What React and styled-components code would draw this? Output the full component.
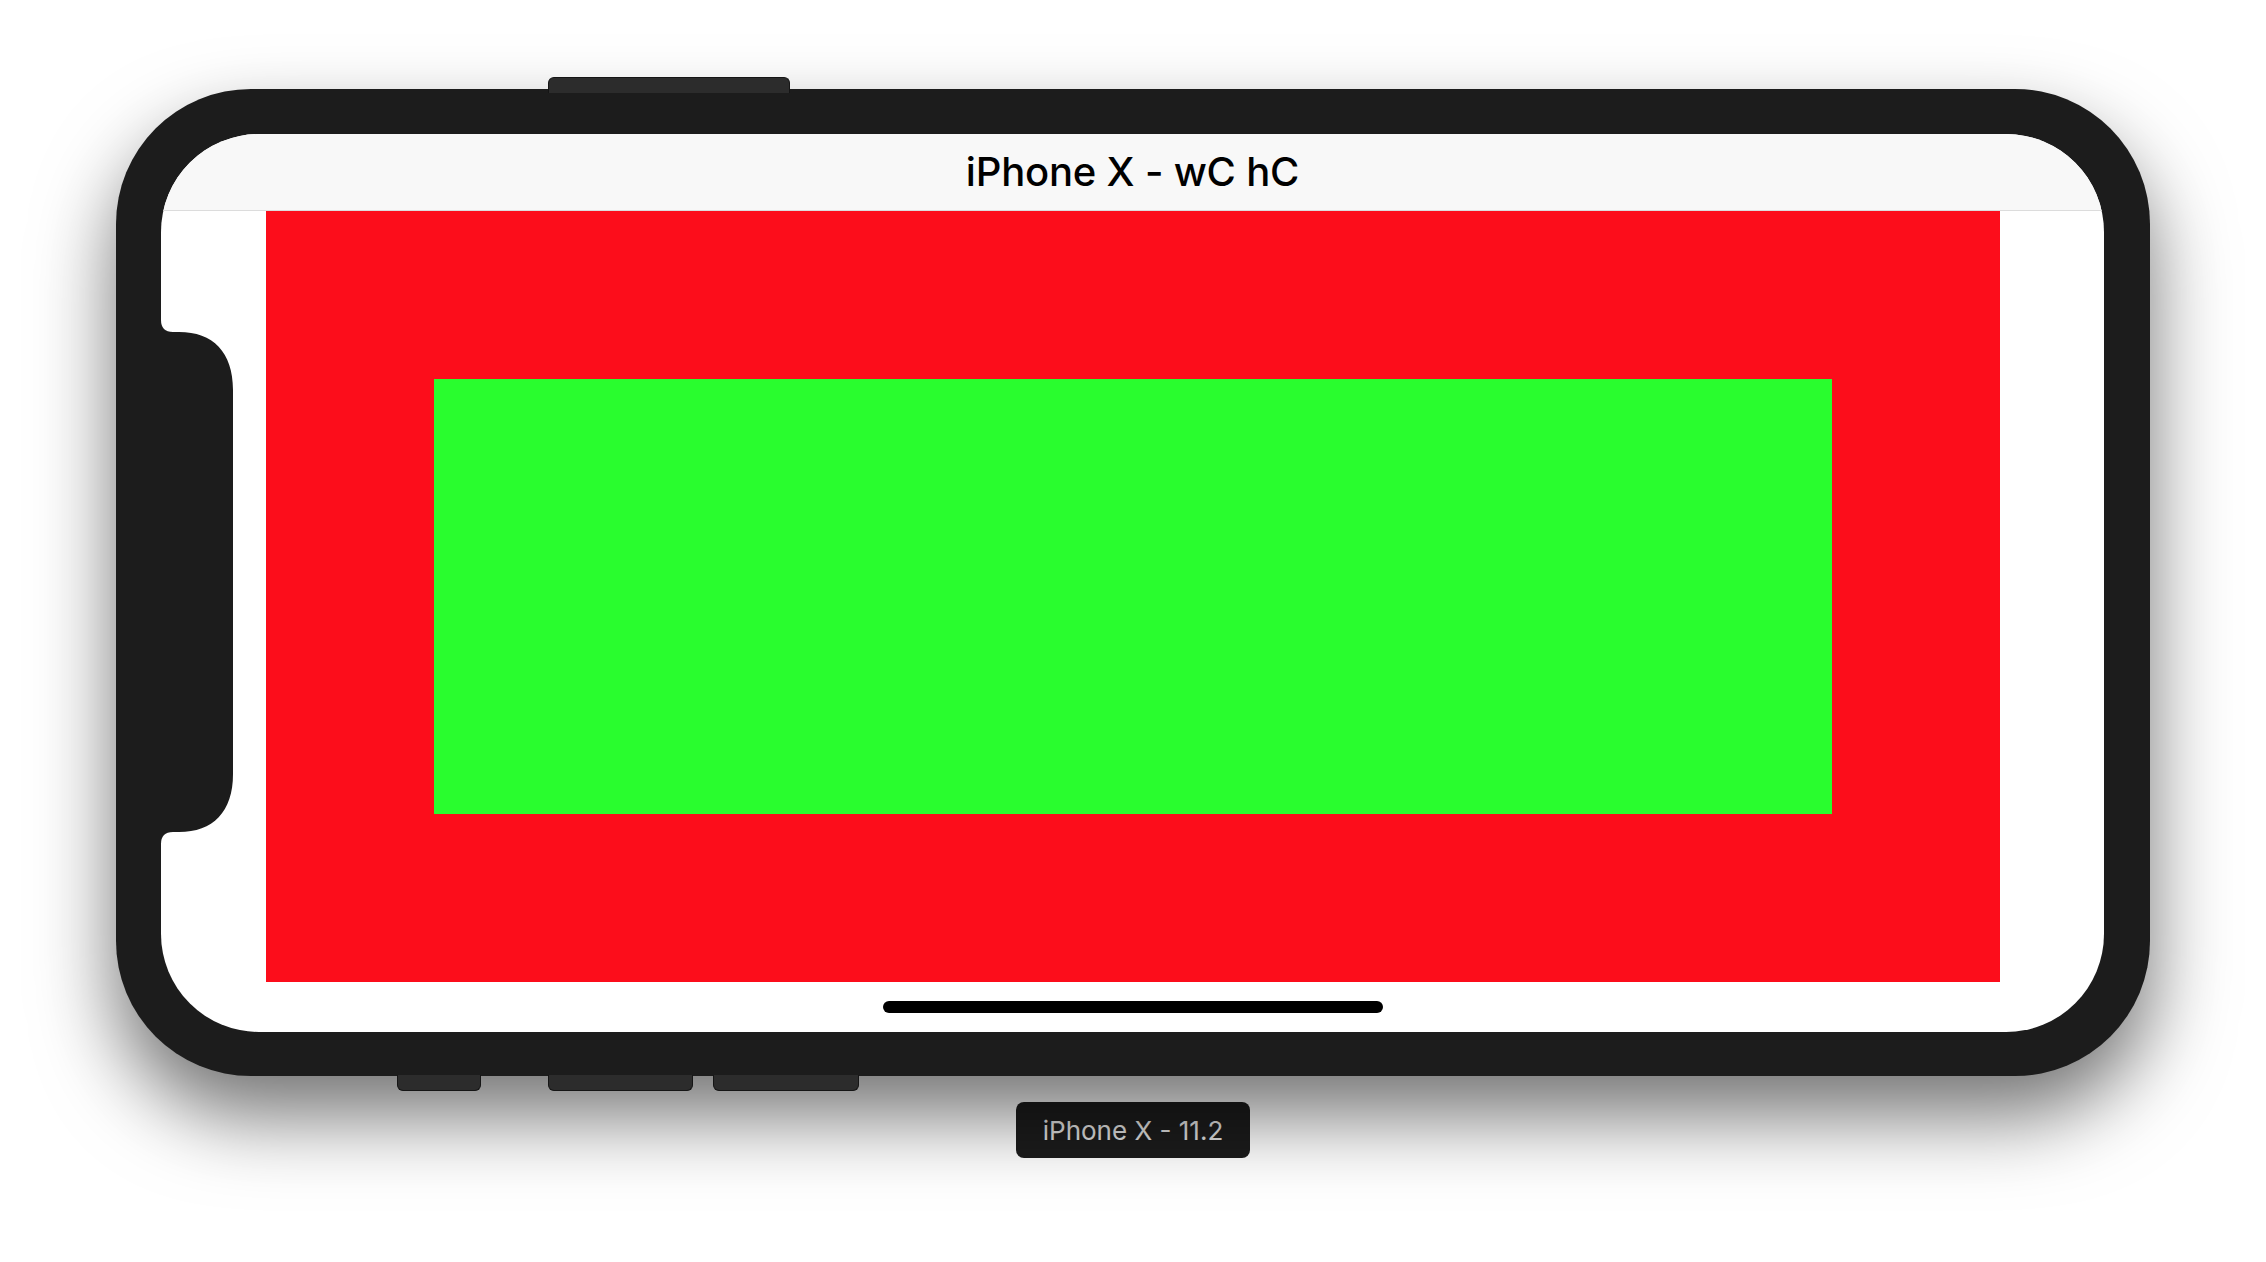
import React from "react";
import styled, { createGlobalStyle } from "styled-components";

const GlobalStyle = createGlobalStyle`
  html, body {
    margin: 0;
    padding: 0;
    background: #ffffff;
    font-family: Inter, "Liberation Sans", sans-serif;
  }
  #root { width: 2266px; height: 1262px; overflow: hidden; }
`;

const Stage = styled.div`
  width: 2266px;
  height: 1262px;
  display: flex;
  flex-direction: column;
  align-items: center;
  padding-top: 89px;
  box-sizing: border-box;
  background: #ffffff;
`;

const Phone = styled.div`
  position: relative;
  width: 2034px;
  height: 987px;
  box-sizing: border-box;
  padding: 45px 46px 44px 45px;
  background: #1c1c1c;
  border-radius: 135px;
  box-shadow: 0 40px 80px rgba(0, 0, 0, 0.55);
  display: flex;
`;

const SideButton = styled.div`
  position: absolute;
  left: ${(p) => p.$left}px;
  width: ${(p) => p.$width}px;
  height: 16px;
  box-sizing: border-box;
  background: #2c2c2c;
  border: 1px solid #151515;
  ${(p) =>
    p.$top
      ? `top: -12px; border-radius: 6px 6px 0 0; border-bottom: none;`
      : `bottom: -15px; border-radius: 0 0 6px 6px; border-top: none;`}
  z-index: 0;
`;

const Screen = styled.div`
  position: relative;
  flex: 1;
  display: flex;
  flex-direction: column;
  background: #ffffff;
  border-radius: 98px;
  overflow: hidden;
  z-index: 1;
`;

const NavBar = styled.div`
  height: 77px;
  flex: none;
  box-sizing: border-box;
  background: #f8f8f8;
  border-bottom: 1px solid #dcdcdc;
  display: flex;
  align-items: center;
  justify-content: center;
  padding-bottom: 2px;
`;

const NavTitle = styled.span`
  font-family: Inter, "Liberation Sans", sans-serif;
  font-weight: 500;
  font-size: 40px;
  color: #000000;
  letter-spacing: -0.2px;
`;

const Content = styled.div`
  flex: 1;
  display: flex;
  flex-direction: column;
  padding: 0 104px 0 105px;
`;

const RedPanel = styled.div`
  flex: 1;
  display: flex;
  padding: 168px;
  background: #fc0d1b;
`;

const GreenPanel = styled.div`
  flex: 1;
  background: #29fd2e;
`;

const HomeIndicator = styled.div`
  width: 500px;
  height: 12px;
  margin: 19px auto;
  border-radius: 6px;
  background: #000000;
  flex: none;
`;

const Notch = styled.svg`
  position: absolute;
  left: 0;
  top: 186px;
  width: 72px;
  height: 524px;
  z-index: 2;
`;

const DeviceLabel = styled.div`
  margin-top: 26px;
  width: 234px;
  height: 56px;
  border-radius: 8px;
  background: #1c1c1c;
  color: #e2e2e2;
  font-family: Inter, "Liberation Sans", sans-serif;
  font-size: 26px;
  font-weight: 400;
  display: flex;
  align-items: center;
  justify-content: center;
`;

export default function App() {
  return (
    <>
      <GlobalStyle />
      <Stage>
        <Phone>
          <SideButton $top $left={432} $width={242} />
          <SideButton $left={281} $width={84} />
          <SideButton $left={432} $width={145} />
          <SideButton $left={597} $width={146} />
          <Screen>
            <NavBar>
              <NavTitle>iPhone X - wC hC</NavTitle>
            </NavBar>
            <Content>
              <RedPanel>
                <GreenPanel />
              </RedPanel>
              <HomeIndicator />
            </Content>
            <Notch viewBox="0 0 72 524">
              <path
                d="M0,0 Q0,12 12,12 L18,12 C52,12 72,32 72,70 L72,454 C72,492 52,512 18,512 L12,512 Q0,512 0,524 Z"
                fill="#1c1c1c"
              />
            </Notch>
          </Screen>
        </Phone>
        <DeviceLabel>iPhone X - 11.2</DeviceLabel>
      </Stage>
    </>
  );
}
